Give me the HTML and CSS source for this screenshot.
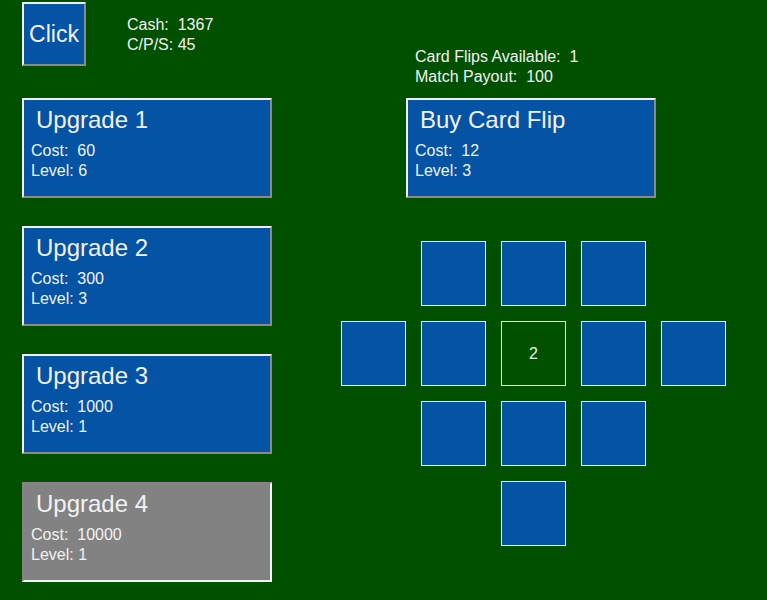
FILE: index.html
```html
<!DOCTYPE html>
<html>
<head>
<meta charset="utf-8">
<link rel="stylesheet" href="styles.css">
</head>
<body>
<div class="page">
  <div class="left">
    <div class="header">
      <button class="click-btn">Click</button>
      <div class="stats">
        <div>Cash:&nbsp; 1367</div>
        <div>C/P/S: 45</div>
      </div>
    </div>
    <div class="upgrades">
      <div class="box">
        <div class="title">Upgrade 1</div>
        <div class="line">Cost:&nbsp; 60</div>
        <div class="line">Level: 6</div>
      </div>
      <div class="box">
        <div class="title">Upgrade 2</div>
        <div class="line">Cost:&nbsp; 300</div>
        <div class="line">Level: 3</div>
      </div>
      <div class="box">
        <div class="title">Upgrade 3</div>
        <div class="line">Cost:&nbsp; 1000</div>
        <div class="line">Level: 1</div>
      </div>
      <div class="box disabled">
        <div class="title">Upgrade 4</div>
        <div class="line">Cost:&nbsp; 10000</div>
        <div class="line">Level: 1</div>
      </div>
    </div>
  </div>
  <div class="right">
    <div class="info">
      <div>Card Flips Available:&nbsp; 1</div>
      <div>Match Payout:&nbsp; 100</div>
    </div>
    <div class="box buy">
      <div class="title">Buy Card Flip</div>
      <div class="line">Cost:&nbsp; 12</div>
      <div class="line">Level: 3</div>
    </div>
    <div class="cards">
      <div class="slot"></div><div class="card"></div><div class="card"></div><div class="card"></div><div class="slot"></div>
      <div class="card"></div><div class="card"></div><div class="card up">2</div><div class="card"></div><div class="card"></div>
      <div class="slot"></div><div class="card"></div><div class="card"></div><div class="card"></div><div class="slot"></div>
      <div class="slot"></div><div class="slot"></div><div class="card"></div><div class="slot"></div><div class="slot"></div>
    </div>
  </div>
</div>
</body>
</html>
```

FILE: styles.css
```css
html, body {
  margin: 0;
  padding: 0;
  background: #005000;
  height: 100%;
}
body {
  font-family: "Liberation Sans", Arial, sans-serif;
  color: #f2f2f2;
  font-size: 16px;
  line-height: 20px;
}
.page {
  display: flex;
  align-items: flex-start;
}
.left {
  padding-left: 22px;
  width: 250px;
}
.header {
  display: flex;
  align-items: flex-start;
  padding-top: 2px;
}
.click-btn {
  box-sizing: border-box;
  width: 64px;
  height: 64px;
  padding: 0;
  margin: 0;
  background: #0553a5;
  color: #f2f2f2;
  font-family: "Liberation Sans", Arial, sans-serif;
  font-size: 23px;
  border-width: 2px;
  border-style: solid;
  border-color: #f0f0f0 #8a8a8a #8a8a8a #f0f0f0;
}
.stats {
  margin-left: 41px;
  margin-top: 13px;
}
.upgrades {
  margin-top: 32px;
  display: flex;
  flex-direction: column;
  gap: 28px;
}
.box {
  box-sizing: border-box;
  width: 250px;
  height: 100px;
  background: #0553a5;
  border-width: 2px;
  border-style: solid;
  border-color: #f0f0f0 #8a8a8a #8a8a8a #f0f0f0;
  padding: 7px 7px 0 7px;
}
.box.disabled {
  background: #828282;
  border-color: #8a8088 #f4f4f4 #f4f4f4 #8a8088;
}
.title {
  font-size: 24px;
  line-height: 26px;
  padding-left: 5px;
  margin-bottom: 8px;
}
.line {
  font-size: 16px;
  line-height: 20px;
}
.right {
  margin-left: 69px;
}
.info {
  margin-top: 47px;
  padding-left: 74px;
}
.buy {
  margin-top: 11px;
  margin-left: 65px;
}
.cards {
  margin-top: 43px;
  display: grid;
  grid-template-columns: repeat(5, 65px);
  grid-auto-rows: 65px;
  gap: 15px;
}
.card {
  box-sizing: border-box;
  border: 1px solid #f0f4f0;
  background: #0553a5;
  display: flex;
  align-items: center;
  justify-content: center;
  font-size: 16px;
}
.card.up {
  background: #005000;
  border-color: #e4f4dc;
  color: #e4f4dc;
}
```
